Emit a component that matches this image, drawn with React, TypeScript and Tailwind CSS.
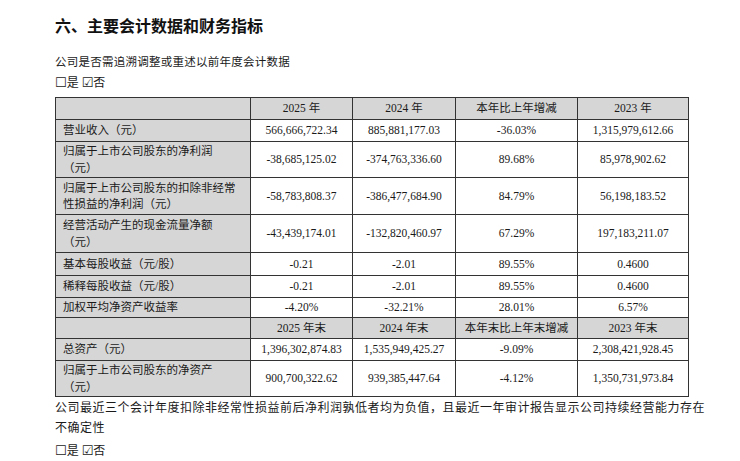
import React from "react";

type Row = { label: React.ReactNode; vals: string[]; h: string; header?: boolean };

const rows: Row[] = [
  { label: "", vals: ["2025 年", "2024 年", "本年比上年增减", "2023 年"], h: "h-[22px]", header: true },
  { label: "营业收入（元）", vals: ["566,666,722.34", "885,881,177.03", "-36.03%", "1,315,979,612.66"], h: "h-[22px]" },
  { label: <>归属于上市公司股东的净利润<br />（元）</>, vals: ["-38,685,125.02", "-374,763,336.60", "89.68%", "85,978,902.62"], h: "h-[36px]" },
  { label: <>归属于上市公司股东的扣除非经常<br />性损益的净利润（元）</>, vals: ["-58,783,808.37", "-386,477,684.90", "84.79%", "56,198,183.52"], h: "h-[37px]" },
  { label: <>经营活动产生的现金流量净额<br />（元）</>, vals: ["-43,439,174.01", "-132,820,460.97", "67.29%", "197,183,211.07"], h: "h-[38px]" },
  { label: "基本每股收益（元/股）", vals: ["-0.21", "-2.01", "89.55%", "0.4600"], h: "h-[23px]" },
  { label: "稀释每股收益（元/股）", vals: ["-0.21", "-2.01", "89.55%", "0.4600"], h: "h-[22px]" },
  { label: "加权平均净资产收益率", vals: ["-4.20%", "-32.21%", "28.01%", "6.57%"], h: "h-[20px]" },
  { label: "", vals: ["2025 年末", "2024 年末", "本年末比上年末增减", "2023 年末"], h: "h-[21px]", header: true },
  { label: "总资产（元）", vals: ["1,396,302,874.83", "1,535,949,425.27", "-9.09%", "2,308,421,928.45"], h: "h-[22px]" },
  { label: <>归属于上市公司股东的净资产<br />（元）</>, vals: ["900,700,322.62", "939,385,447.64", "-4.12%", "1,350,731,973.84"], h: "h-[36px]" },
];

const font = { fontFamily: '"Liberation Serif", "Noto Sans CJK SC", serif' };
const sym = { fontFamily: '"DejaVu Sans", sans-serif' };

function YesNo({ className }: { className: string }) {
  return (
    <p className={className}>
      <span style={sym} className="text-[13px]">☐</span>是{" "}
      <span style={sym} className="text-[13px]">☑</span>否
    </p>
  );
}

export default function App() {
  return (
    <div className="w-[740px] h-[461px] bg-white text-[#1a1a1a] pl-[55px] pt-[14px] overflow-hidden" style={font}>
      <h1 className="text-[16px] leading-[22px] font-bold text-[#111]" style={{ fontFamily: '"Noto Sans CJK SC", sans-serif' }}>
        六、主要会计数据和财务指标
      </h1>
      <p className="mt-[17px] text-[11.5px] leading-[18px] tracking-[0.25px]">公司是否需追溯调整或重述以前年度会计数据</p>
      <YesNo className="mt-[3px] text-[12px] leading-[18px]" />
      <table className="mt-[5px] w-[633px] table-fixed border-collapse text-[11.5px] leading-[16.5px]">
        <colgroup>
          <col className="w-[195px]" />
          <col className="w-[102px]" />
          <col className="w-[103px]" />
          <col className="w-[122px]" />
          <col className="w-[111px]" />
        </colgroup>
        <tbody>
          {rows.map((r, i) => (
            <tr key={i} className={r.h}>
              <td className="border-[1.5px] border-[#333] bg-[#d6d6d6] pl-[7px] py-0 align-middle whitespace-nowrap">{r.label}</td>
              {r.vals.map((v, j) => (
                <td
                  key={j}
                  className={
                    "border-[1.5px] border-[#333] text-center align-middle whitespace-nowrap p-0 " +
                    (r.header ? "bg-[#d6d6d6]" : "bg-white")
                  }
                >
                  {v}
                </td>
              ))}
            </tr>
          ))}
        </tbody>
      </table>
      <p className="mt-px text-[12px] leading-[20px] tracking-[0.5px] whitespace-nowrap">
        公司最近三个会计年度扣除非经常性损益前后净利润孰低者均为负值，且最近一年审计报告显示公司持续经营能力存在
        <br />
        不确定性
      </p>
      <YesNo className="mt-[4px] text-[12px] leading-[18px]" />
    </div>
  );
}
